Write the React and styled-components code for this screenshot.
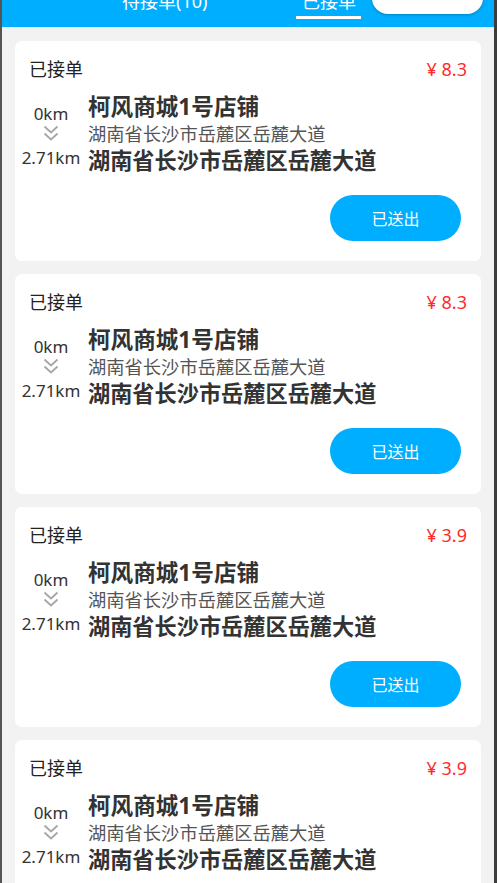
import React from 'react';
import styled, { createGlobalStyle } from 'styled-components';

const GlobalStyle = createGlobalStyle`
  html, body {
    margin: 0;
    height: 100%;
    overflow: hidden;
    background: #f2f2f2;
  }
  body {
    font-family: "Noto Sans", "Noto Sans CJK SC", sans-serif;
  }
  #root {
    height: 100%;
  }
`;

const Frame = styled.div({
  height: '100%',
  borderLeft: '2px solid #555',
  borderRight: '3px solid #3c3c3c',
  background: '#f2f2f2',
  overflow: 'hidden'
});

const Header = styled.div({
  height: 27,
  background: '#00aeff',
  display: 'flex',
  alignItems: 'flex-end',
  overflow: 'hidden',
  paddingLeft: 120
});

const Tab = styled.div`
  display: flex;
  flex-direction: column;
  align-items: center;
  margin-right: ${(p) => p.$gap}px;
  margin-bottom: 8px;
`;

const TabText = styled.span({
  color: '#fff',
  fontSize: 18,
  lineHeight: '22px',
  whiteSpace: 'nowrap'
});

const TabLine = styled.div`
  width: 65px;
  height: 3px;
  margin-top: 4px;
  background: ${(p) => (p.$active ? '#fff' : 'transparent')};
`;

const SearchPill = styled.div({
  width: 111,
  height: 32,
  borderRadius: 16,
  background: '#fff',
  boxShadow: '0 1px 3px rgba(0,0,0,0.25)',
  marginBottom: 13,
  display: 'flex',
  alignItems: 'center',
  justifyContent: 'flex-end',
  paddingRight: 16,
  boxSizing: 'border-box'
});

const List = styled.div({
  padding: '14px 13px 0',
  display: 'flex',
  flexDirection: 'column',
  gap: 13
});

const Card = styled.div({
  background: '#fff',
  borderRadius: 7,
  padding: '16px 14px 20px',
  display: 'flex',
  flexDirection: 'column'
});

const CardTop = styled.div({
  display: 'flex',
  justifyContent: 'space-between',
  alignItems: 'center',
  height: 24
});

const Status = styled.span({
  fontSize: 18,
  color: '#222',
  lineHeight: '24px'
});

const Price = styled.span({
  fontSize: 18,
  color: '#ff2b2b',
  lineHeight: '24px'
});

const Route = styled.div({
  display: 'flex',
  marginTop: 12,
  marginLeft: -9
});

const Distance = styled.div({
  width: 62,
  display: 'flex',
  flexDirection: 'column',
  alignItems: 'center',
  paddingTop: 11,
  marginRight: 6
});

const Km = styled.span({
  fontSize: 17,
  lineHeight: '20px',
  color: '#333',
  whiteSpace: 'nowrap'
});

const Arrows = styled.svg({
  display: 'block',
  margin: '1px 0 6px'
});

const Places = styled.div({
  display: 'flex',
  flexDirection: 'column'
});

const Shop = styled.div({
  fontSize: 22.6,
  fontWeight: 700,
  lineHeight: '28px',
  color: '#333'
});

const Address = styled.div({
  fontSize: 18.3,
  lineHeight: '26px',
  color: '#555'
});

const Dest = styled.div({
  fontSize: 22.2,
  fontWeight: 700,
  lineHeight: '28px',
  color: '#333'
});

const Actions = styled.div({
  display: 'flex',
  justifyContent: 'flex-end',
  marginTop: 20,
  paddingRight: 6
});

const SendButton = styled.button({
  width: 131,
  height: 46,
  borderRadius: 23,
  border: 'none',
  background: '#00aeff',
  color: '#fff',
  fontSize: 16,
  fontFamily: 'inherit',
  padding: 0
});

const orders = [
  { id: 1, price: '8.3' },
  { id: 2, price: '8.3' },
  { id: 3, price: '3.9' },
  { id: 4, price: '3.9' }
];

const OrderCard = ({ order }) => (
  <Card>
    <CardTop>
      <Status>已接单</Status>
      <Price>¥ {order.price}</Price>
    </CardTop>
    <Route>
      <Distance>
        <Km>0km</Km>
        <Arrows width="16" height="17" viewBox="0 0 16 17">
          <polyline points="1.5,1.5 8,7.5 14.5,1.5" fill="none" stroke="#a6a6a6" strokeWidth="1.8" />
          <polyline points="1.5,8.5 8,14.5 14.5,8.5" fill="none" stroke="#a6a6a6" strokeWidth="1.8" />
        </Arrows>
        <Km>2.71km</Km>
      </Distance>
      <Places>
        <Shop>柯风商城1号店铺</Shop>
        <Address>湖南省长沙市岳麓区岳麓大道</Address>
        <Dest>湖南省长沙市岳麓区岳麓大道</Dest>
      </Places>
    </Route>
    <Actions>
      <SendButton>已送出</SendButton>
    </Actions>
  </Card>
);

const App = () => (
  <Frame>
    <GlobalStyle />
    <Header>
      <Tab $gap={89}>
        <TabText>待接单(10)</TabText>
        <TabLine />
      </Tab>
      <Tab $gap={11}>
        <TabText>已接单</TabText>
        <TabLine $active />
      </Tab>
      <SearchPill>
        <svg width="20" height="20" viewBox="0 0 20 20" style={{ marginTop: -14 }}>
          <circle cx="9" cy="9" r="7" fill="none" stroke="#111" strokeWidth="2.5" />
        </svg>
      </SearchPill>
    </Header>
    <List>
      {orders.map((order) => (
        <OrderCard key={order.id} order={order} />
      ))}
    </List>
  </Frame>
);

export default App;
